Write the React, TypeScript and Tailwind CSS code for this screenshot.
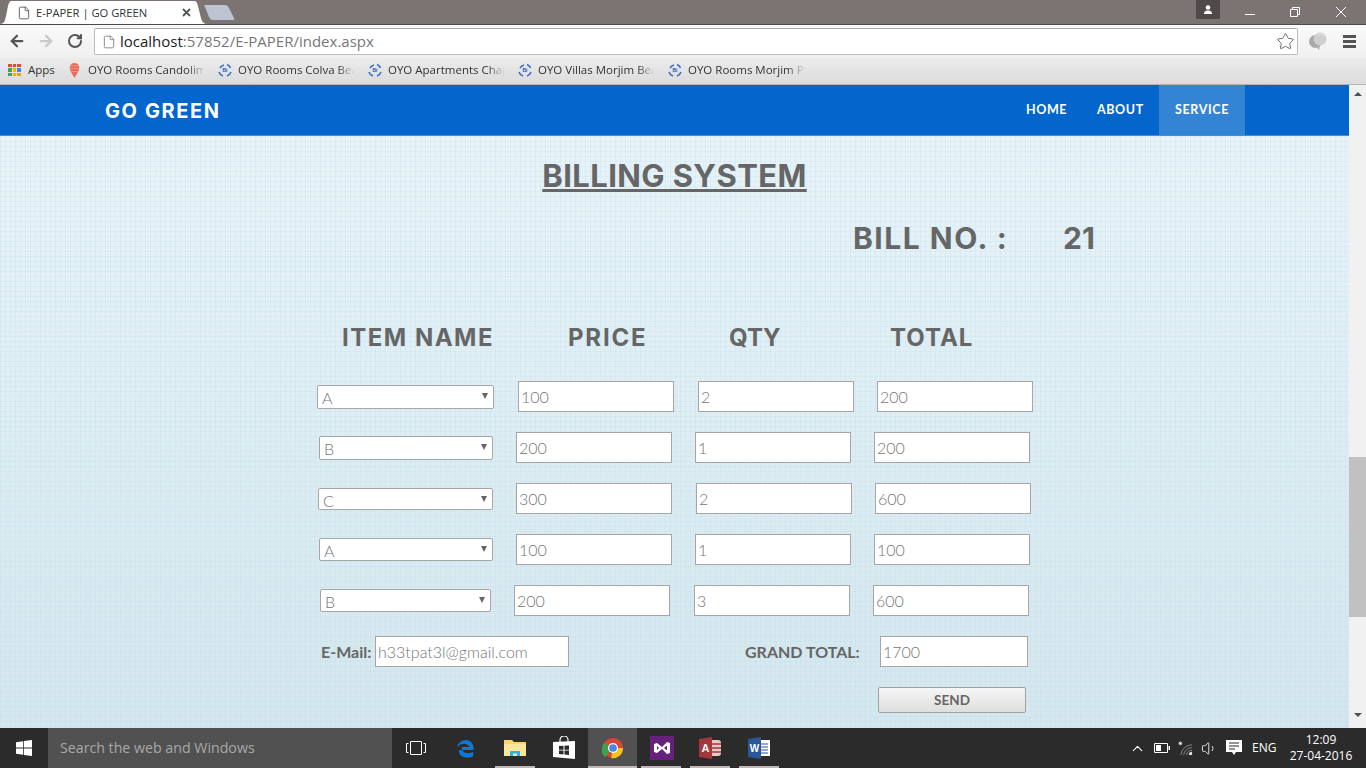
import { ArrowLeft, ArrowRight, ChevronUp, File, RotateCw, Star, Volume1 } from "lucide-react";

const LIGHT = "font-['Lato','Open_Sans',sans-serif] font-light text-[16px] text-[#767676]";
const HEAD = "font-['Inter',sans-serif] font-bold text-[#666666]";
const BOX = "border border-[#a6a6a6] bg-white outline-none";
const FADE = "overflow-hidden whitespace-nowrap [mask-image:linear-gradient(to_right,black_85%,transparent)]";

const ROWS = [
  { item: "A", price: "100", qty: "2", total: "200", sel: "ml-[317px] w-[177px] h-[24px]", a: "ml-[24px]", b: "ml-[24px]", c: "ml-[23px]" },
  { item: "B", price: "200", qty: "1", total: "200", sel: "ml-[319px] w-[174px] h-[24px]", a: "ml-[23px]", b: "ml-[23px]", c: "ml-[23px]" },
  { item: "C", price: "300", qty: "2", total: "600", sel: "ml-[318px] w-[175px] h-[22px]", a: "ml-[23px]", b: "ml-[24px]", c: "ml-[23px]" },
  { item: "A", price: "100", qty: "1", total: "100", sel: "ml-[319px] w-[174px] h-[23px]", a: "ml-[23px]", b: "ml-[23px]", c: "ml-[23px]" },
  { item: "B", price: "200", qty: "3", total: "600", sel: "ml-[320px] w-[171px] h-[23px]", a: "ml-[23px]", b: "ml-[24px]", c: "ml-[23px]" },
];

const BOOKMARKS = ["OYO Rooms Colva Bea", "OYO Apartments Chap", "OYO Villas Morjim Bea", "OYO Rooms Morjim Pl"];

function Field({ value, className }: { value: string; className: string }) {
  return (
    <input
      readOnly
      value={value}
      className={`${BOX} ${LIGHT} h-[31px] shrink-0 pl-[2px] ${className}`}
    />
  );
}

function BiIcon() {
  return (
    <svg viewBox="0 0 16 16" className="w-[16px] h-[16px] shrink-0">
      <path d="M3 6a6 6 0 0 1 4-3M10 2.500a6 6 0 0 1 3.500 3.500M14 10a6.500 6.500 0 0 1-4 4M6 14a6 6 0 0 1-4-4" fill="none" stroke="#3f6fc4" strokeWidth="1.600" />
      <rect x="5" y="5.500" width="6" height="5.500" rx="1" fill="#dbe4f3" />
      <text x="8" y="10.300" textAnchor="middle" fontSize="5" fontWeight="700" fill="#2a56a8" fontFamily="Liberation Sans">Bi</text>
    </svg>
  );
}

function AppsIcon() {
  const colors = ["#e8483a", "#e8483a", "#e8483a", "#3aa757", "#f4b400", "#4285f4", "#3aa757", "#f4b400", "#f4a000"];
  return (
    <div className="grid grid-cols-3 gap-[1px] w-[13px] shrink-0">
      {colors.map((c, i) => (
        <span key={i} className="h-[3.600px] w-[3.600px]" style={{ backgroundColor: c }} />
      ))}
    </div>
  );
}

function TabStrip() {
  return (
    <div className="h-[25px] bg-[#7b7473] border-b border-[#4f4b4a] flex items-end shrink-0">
      <svg viewBox="0 0 12 24" className="w-[12px] h-[24px] shrink-0" preserveAspectRatio="none">
        <path d="M0 24C4 24 5 21 6 16L8 6C9 2 10 1 12 1V24Z" fill="#fff" />
      </svg>
      <div className="h-[23px] w-[182px] bg-white flex items-center shrink-0 -mt-px">
        <File size={14} className="ml-[5px] text-[#555]" strokeWidth={1.500} />
        <span className="ml-[5px] font-['Open_Sans',sans-serif] text-[11.200px] leading-none text-[#333] whitespace-nowrap">E-PAPER | GO GREEN</span>
        <svg viewBox="0 0 9 9" className="ml-auto mr-[3px] w-[9px] h-[9px]">
          <path d="M1 1l7 7M8 1l-7 7" stroke="#555" strokeWidth="1.800" />
        </svg>
      </div>
      <svg viewBox="0 0 13 24" className="w-[13px] h-[24px] shrink-0" preserveAspectRatio="none">
        <path d="M0 1C2 1 3 2 4 6L7 18C8 22 10 24 13 24H0Z" fill="#fff" />
      </svg>
      <svg viewBox="0 0 32 15" className="w-[32px] h-[15px] mb-[4px] -ml-[3px] shrink-0">
        <path d="M1 0H21C23 0 24 1 25 3L30 13C31 14 30 15 29 15H9C7 15 6 14 5 12L1 2C0 1 0 0 1 0Z" fill="#bdc3cf" />
      </svg>
      <div className="ml-auto self-start h-[19px] w-[24px] bg-[#4f4a49] flex items-center justify-center mr-[146px] shrink-0">
        <svg viewBox="0 0 10 9" className="w-[10px] h-[9px]">
          <circle cx="5" cy="2.500" r="2.300" fill="#fff" />
          <path d="M1 9C1 6 3 5.500 5 5.500S9 6 9 9Z" fill="#fff" />
        </svg>
      </div>
      <WindowControls />
    </div>
  );
}

function WindowControls() {
  return (
    <div className="absolute top-[7px] right-[20px] flex items-center">
      <span className="block w-[10px] h-px bg-white mt-[5px] mr-[35px]" />
      <svg viewBox="0 0 10 10" className="w-[10px] h-[10px] mr-[36px]">
        <path d="M.5 2.500h7v7h-7zM2.500 2.500v-2h7v7h-2" fill="none" stroke="#fff" />
      </svg>
      <svg viewBox="0 0 10 10" className="w-[10px] h-[10px]">
        <path d="M0 0l10 10M10 0L0 10" stroke="#fff" />
      </svg>
    </div>
  );
}

function Toolbar() {
  return (
    <div className="h-[32px] bg-[linear-gradient(#fafafa,#f0f0f0)] flex items-center shrink-0">
      <ArrowLeft size={18} strokeWidth={3} className="ml-[8px] text-[#555]" />
      <ArrowRight size={18} strokeWidth={3} className="ml-[11px] text-[#c8c8c8]" />
      <RotateCw size={16} strokeWidth={3} className="ml-[12px] text-[#555]" />
      <div className="ml-[11px] mt-[1px] w-[1204px] h-[27px] bg-white border border-[#bcbcbc] border-t-[#a8a8a8] rounded-[2px] flex items-center shrink-0">
        <File size={14} strokeWidth={1.400} className="ml-[7px] text-[#777]" />
        <span className="ml-[4px] font-['Open_Sans',sans-serif] text-[15px] leading-none whitespace-nowrap text-[#777]">
          <span className="text-[#222]">localhost</span>:57852/E-PAPER/index.aspx
        </span>
        <Star size={19} strokeWidth={1.200} className="ml-auto mr-[2px] text-[#666]" />
      </div>
      <svg viewBox="0 0 20 20" className="ml-[10px] w-[20px] h-[20px] shrink-0">
        <circle cx="7.500" cy="10.500" r="6.500" fill="#a9a9a9" />
        <circle cx="12" cy="8" r="6.500" fill="#cfcfcf" />
        <path d="M9 3.500a5 5 0 0 1 7 2" fill="none" stroke="#e6e6e6" />
        <path d="M7 15l4 4 1-4z" fill="#b5b5b5" />
      </svg>
      <div className="ml-[15px] w-[13px] flex flex-col gap-[2px] shrink-0">
        <span className="h-[3px] bg-[#555]" />
        <span className="h-[3px] bg-[#555]" />
        <span className="h-[3px] bg-[#555]" />
      </div>
    </div>
  );
}

function BookmarkBar() {
  return (
    <div className="h-[28px] bg-[linear-gradient(#ececec,#dcdcdc)] border-b border-[#b4b4b4] flex items-center pl-[8px] pb-[1px] font-['Open_Sans',sans-serif] text-[11.500px] text-[#333] shrink-0">
      <AppsIcon />
      <span className="ml-[7px] w-[40px]">Apps</span>
      <svg viewBox="0 0 12 18" className="w-[13px] h-[17px] shrink-0">
        <path d="M6 17L2 10C0 6 1 1 6 1s6 5 4 9z" fill="#e96a57" />
        <path d="M1.500 4h9M1.200 7h9.600M2.500 10h7" stroke="#f3a596" strokeWidth=".8" />
      </svg>
      <span className={`ml-[7px] w-[117px] mr-[12px] ${FADE}`}>OYO Rooms Candolim</span>
      {BOOKMARKS.map((label) => (
        <div key={label} className="flex items-center w-[150px] shrink-0">
          <BiIcon />
          <span className={`ml-[5px] w-[117px] ${FADE}`}>{label}</span>
        </div>
      ))}
    </div>
  );
}

function Nav() {
  return (
    <nav className="h-[51px] bg-[#0366cc] border-b border-[#3d8fe3] flex items-stretch shrink-0">
      <a className="ml-[105px] pt-[1px] self-center font-['Inter',sans-serif] font-bold text-[20px] tracking-[1.6px] text-white">GO GREEN</a>
      <div className="ml-auto mr-[104px] flex font-['Lato',sans-serif] font-bold text-[12.500px] tracking-[0.6px] text-white">
        <span className="w-[71px] flex items-center pl-[15px] pr-[15px] pt-[1px]">HOME</span>
        <span className="w-[62px] flex items-center pl-[15px] pt-[1px]">ABOUT</span>
        <span className="w-[86px] flex items-center justify-center bg-[#3484d6] ml-[15px] pt-[1px]">SERVICE</span>
      </div>
    </nav>
  );
}

function BillingPage() {
  return (
    <main className="flex-1 min-w-0 overflow-hidden bg-[linear-gradient(rgba(180,222,228,.22)_1px,transparent_1px),linear-gradient(90deg,rgba(180,222,228,.22)_1px,transparent_1px),linear-gradient(#e8f3f9,#d4e6ee)] bg-[size:5px_5px,5px_5px,100%_100%]">
      <h1 className={`${HEAD} mt-[21px] text-center text-[31px] leading-[38px] tracking-[0.4px] underline decoration-[3px] underline-offset-[2px]`}>BILLING SYSTEM</h1>
      <div className={`${HEAD} mt-[25px] flex text-[30px] leading-[36px]`}>
        <span className="ml-[853px] w-[210px] tracking-[1.500px]">BILL NO. :</span>
        <span className="tracking-[0px]">21</span>
      </div>
      <div className={`${HEAD} mt-[66px] flex text-[24px] leading-[32px] whitespace-nowrap`}>
        <span className="ml-[342px] w-[226px] tracking-[1.500px]">ITEM NAME</span>
        <span className="w-[161px] tracking-[1.800px]">PRICE</span>
        <span className="w-[162px]">QTY</span>
        <span className="-ml-[1px] tracking-[1px]">TOTAL</span>
      </div>
      <div className="mt-[27px] flex flex-col gap-[20px]">
        {ROWS.map((r, i) => (
          <div key={i} className="flex items-center h-[31px]">
            <div className={`relative shrink-0 ${r.sel}`}>
              <select className={`${LIGHT} ${BOX} appearance-none w-full h-full rounded-[2px] pl-[4px] opacity-100`} value={r.item} disabled>
                <option>{r.item}</option>
              </select>
              <span className="absolute right-[6px] top-[8px] border-x-[3.500px] border-x-transparent border-t-[6px] border-t-[#666]" />
            </div>
            <Field value={r.price} className={`${r.a} w-[156px]`} />
            <Field value={r.qty} className={`${r.b} w-[156px]`} />
            <Field value={r.total} className={`${r.c} w-[156px]`} />
          </div>
        ))}
      </div>
      <div className="mt-[20px] flex items-center h-[31px] font-['Lato',sans-serif] font-bold text-[16px] text-[#666]">
        <span className="ml-[321px] w-[54px] whitespace-nowrap">E-Mail:</span>
        <Field value="h33tpat3l@gmail.com" className="w-[194px]" />
        <span className="ml-[176px] w-[135px] whitespace-nowrap">GRAND TOTAL:</span>
        <Field value="1700" className="w-[148px]" />
      </div>
      <div className="mt-[20px] pl-[878px]">
        <button className="w-[148px] h-[26px] rounded-[2px] border border-[#a0a0a0] bg-[linear-gradient(#f6f6f6,#dedede)] font-['Lato',sans-serif] font-bold text-[13.500px] text-[#666]">SEND</button>
      </div>
    </main>
  );
}

function Scrollbar() {
  return (
    <div className="w-[17px] bg-[#f1f1f1] flex flex-col items-center shrink-0">
      <span className="mt-[7px] border-x-[4px] border-x-transparent border-b-[4px] border-b-[#505050]" />
      <div className="mt-[361px] w-full h-[160px] bg-[#c1c1c1]" />
      <span className="mt-[96px] border-x-[4px] border-x-transparent border-t-[4px] border-t-[#505050]" />
    </div>
  );
}

function TaskIcon({ active, bar, children }: { active?: boolean; bar?: boolean; children: React.ReactNode }) {
  return (
    <div className={`relative w-[48.800px] h-full flex items-center justify-center shrink-0 ${active ? "bg-[#515151]" : ""}`}>
      {children}
      {bar && <span className={`absolute bottom-0 h-[2px] bg-[#bdb8b5] ${active ? "left-0 right-0" : "left-[4px] right-[5px]"}`} />}
    </div>
  );
}

function Taskbar() {
  return (
    <footer className="h-[40px] bg-[#2b2b2b] flex items-center shrink-0 text-white">
      <div className="w-[48px] h-full flex items-center justify-center shrink-0">
        <svg viewBox="0 0 16 16" className="w-[16px] h-[16px]">
          <path d="M0 2.300L7 1.200V7.600H0zM7.800 1.100L16 0V7.600H7.800zM0 8.400H7V14.800L0 13.700zM7.800 8.400H16V16L7.800 14.900z" fill="#fff" />
        </svg>
      </div>
      <div className="w-[344px] h-full bg-[#515151] flex items-center pl-[12px] font-['Open_Sans',sans-serif] text-[14.200px] text-[#a8a8a8] shrink-0">Search the web and Windows</div>
      <div className="w-[47px] flex justify-center shrink-0">
        <svg viewBox="0 0 20 14" className="w-[20px] h-[14px]">
          <path d="M4.500.5h11v13h-11zM2.500 2.500H.5v9h2M17.500 2.500h2v9h-2" fill="none" stroke="#fff" />
        </svg>
      </div>
      <div className="flex items-center h-full ml-[3px]">
        <TaskIcon>
          <svg viewBox="0 0 22 22" className="w-[21px] h-[21px]">
            <path d="M3 12.500H18.500C19 6 15 2 10.500 2 6 2 2 5 1 10 3 7 6 6 8.500 6 11 6 13.500 7.500 14 9.500H6C6 14 9 16 12 16 14.500 16 16.500 15.500 18 14.500V19C16 20 14 20.500 11.500 20.500 6 20.500 2.500 17 3 12.500Z" fill="#0a78d7" />
          </svg>
        </TaskIcon>
        <TaskIcon bar>
          <svg viewBox="0 0 22 20" className="w-[22px] h-[20px]">
            <path d="M0 2h8l2 2h12v14H0z" fill="#f6d46f" />
            <path d="M0 6h22v12H0z" fill="#fbe59c" />
            <path d="M6 18v-5h10v5h-3v-2.500H9V18z" fill="#27b4e8" />
          </svg>
        </TaskIcon>
        <TaskIcon>
          <svg viewBox="0 0 22 24" className="w-[22px] h-[24px]">
            <path d="M7 6V4a4 4 0 0 1 8 0v2" fill="none" stroke="#fff" strokeWidth="1.200" />
            <path d="M0 6l22-1v18L0 21z" fill="#fff" />
            <path d="M6 10l4.500-.3v4H6zM11.500 9.700L16 9.500v4.200h-4.500zM6 14.500h4.500v4L6 18zM11.500 14.500H16v4.600l-4.500-.5z" fill="#2b2b2b" />
          </svg>
        </TaskIcon>
        <TaskIcon active bar>
          <svg viewBox="0 0 24 24" className="w-[22px] h-[22px]">
            <circle cx="12" cy="12" r="11" fill="#db4437" />
            <path d="M12 12L3 22A11 11 0 0 1 2.500 6.500z" fill="#3fa14f" />
            <path d="M12 12L23 12A11 11 0 0 1 10 23z" fill="#f6c21c" />
            <circle cx="12" cy="12" r="5.500" fill="#fff" />
            <circle cx="12" cy="12" r="4.200" fill="#4a86e8" />
          </svg>
        </TaskIcon>
        <TaskIcon bar>
          <svg viewBox="0 0 24 24" className="w-[24px] h-[24px]">
            <rect width="24" height="24" fill="#68217a" />
            <path d="M4 8l3-1 5 4 5-5 3 1v10l-3 1-5-5-5 4-3-1zM7 10v4l2-2zM17 9.500l-3 2.500 3 2.500z" fill="#fff" fillRule="evenodd" />
          </svg>
        </TaskIcon>
        <TaskIcon bar>
          <svg viewBox="0 0 24 24" className="w-[24px] h-[24px]">
            <rect x="11" y="4" width="12" height="16" rx="3" fill="#e8c9c9" />
            <path d="M11 8h12M11 12h12M11 16h12" stroke="#a4373a" strokeWidth="1.500" />
            <path d="M1 3l13-2v22L1 21z" fill="#a4373a" />
            <text x="7.500" y="16" textAnchor="middle" fontSize="11" fontWeight="700" fill="#fff" fontFamily="Liberation Sans">A</text>
          </svg>
        </TaskIcon>
        <TaskIcon bar>
          <svg viewBox="0 0 24 24" className="w-[24px] h-[24px]">
            <rect x="11" y="4" width="12" height="16" fill="#fff" />
            <path d="M14 8h7M14 11h7M14 14h7M14 17h7" stroke="#2b579a" strokeWidth="1.200" />
            <path d="M1 3l13-2v22L1 21z" fill="#2b579a" />
            <text x="7.500" y="16" textAnchor="middle" fontSize="10" fontWeight="700" fill="#fff" fontFamily="Liberation Sans">W</text>
          </svg>
        </TaskIcon>
      </div>
      <div className="ml-auto flex items-center h-full font-['Open_Sans',sans-serif] text-[12px]">
        <ChevronUp size={17} strokeWidth={1.500} />
        <svg viewBox="0 0 16 10" className="ml-[8px] w-[16px] h-[10px]">
          <path d="M.5.5h13v9H.5z" fill="none" stroke="#fff" />
          <path d="M2 2h5v6H2zM14.500 3H16v4h-1.500z" fill="#fff" />
        </svg>
        <svg viewBox="0 0 16 16" className="ml-[8px] w-[15px] h-[15px]">
          <path d="M.5 2.500h4M2.500.5v4M1 1l3 3M4 1L1 4" stroke="#fff" strokeWidth=".8" />
          <path d="M3 15A12 12 0 0 1 15 4M6 15A9 9 0 0 1 15 7M9 15A6 6 0 0 1 15 10" fill="none" stroke="#8a8a8a" />
          <path d="M11.500 15a3.500 3.500 0 0 1 3.500-3.500V15z" fill="#ddd" />
        </svg>
        <Volume1 size={17} strokeWidth={1.200} className="ml-[8px]" />
        <svg viewBox="0 0 16 16" className="ml-[8px] w-[16px] h-[16px]">
          <path d="M0 0h16v12H10l-2 3-2-3H0z" fill="#fff" />
          <path d="M3 3h10M3 6h10M3 9h6" stroke="#2b2b2b" />
        </svg>
        <span className="ml-[10px] w-[35px]">ENG</span>
        <div className="w-[68px] mr-[11px] text-center leading-[16px] whitespace-nowrap">
          <div>12:09</div>
          <div>27-04-2016</div>
        </div>
      </div>
    </footer>
  );
}

export default function App() {
  return (
    <div className="relative h-[768px] w-[1366px] overflow-hidden flex flex-col">
      <TabStrip />
      <Toolbar />
      <BookmarkBar />
      <div className="flex-1 min-h-0 flex">
        <div className="flex-1 min-w-0 flex flex-col">
          <Nav />
          <BillingPage />
        </div>
        <Scrollbar />
      </div>
      <Taskbar />
    </div>
  );
}
